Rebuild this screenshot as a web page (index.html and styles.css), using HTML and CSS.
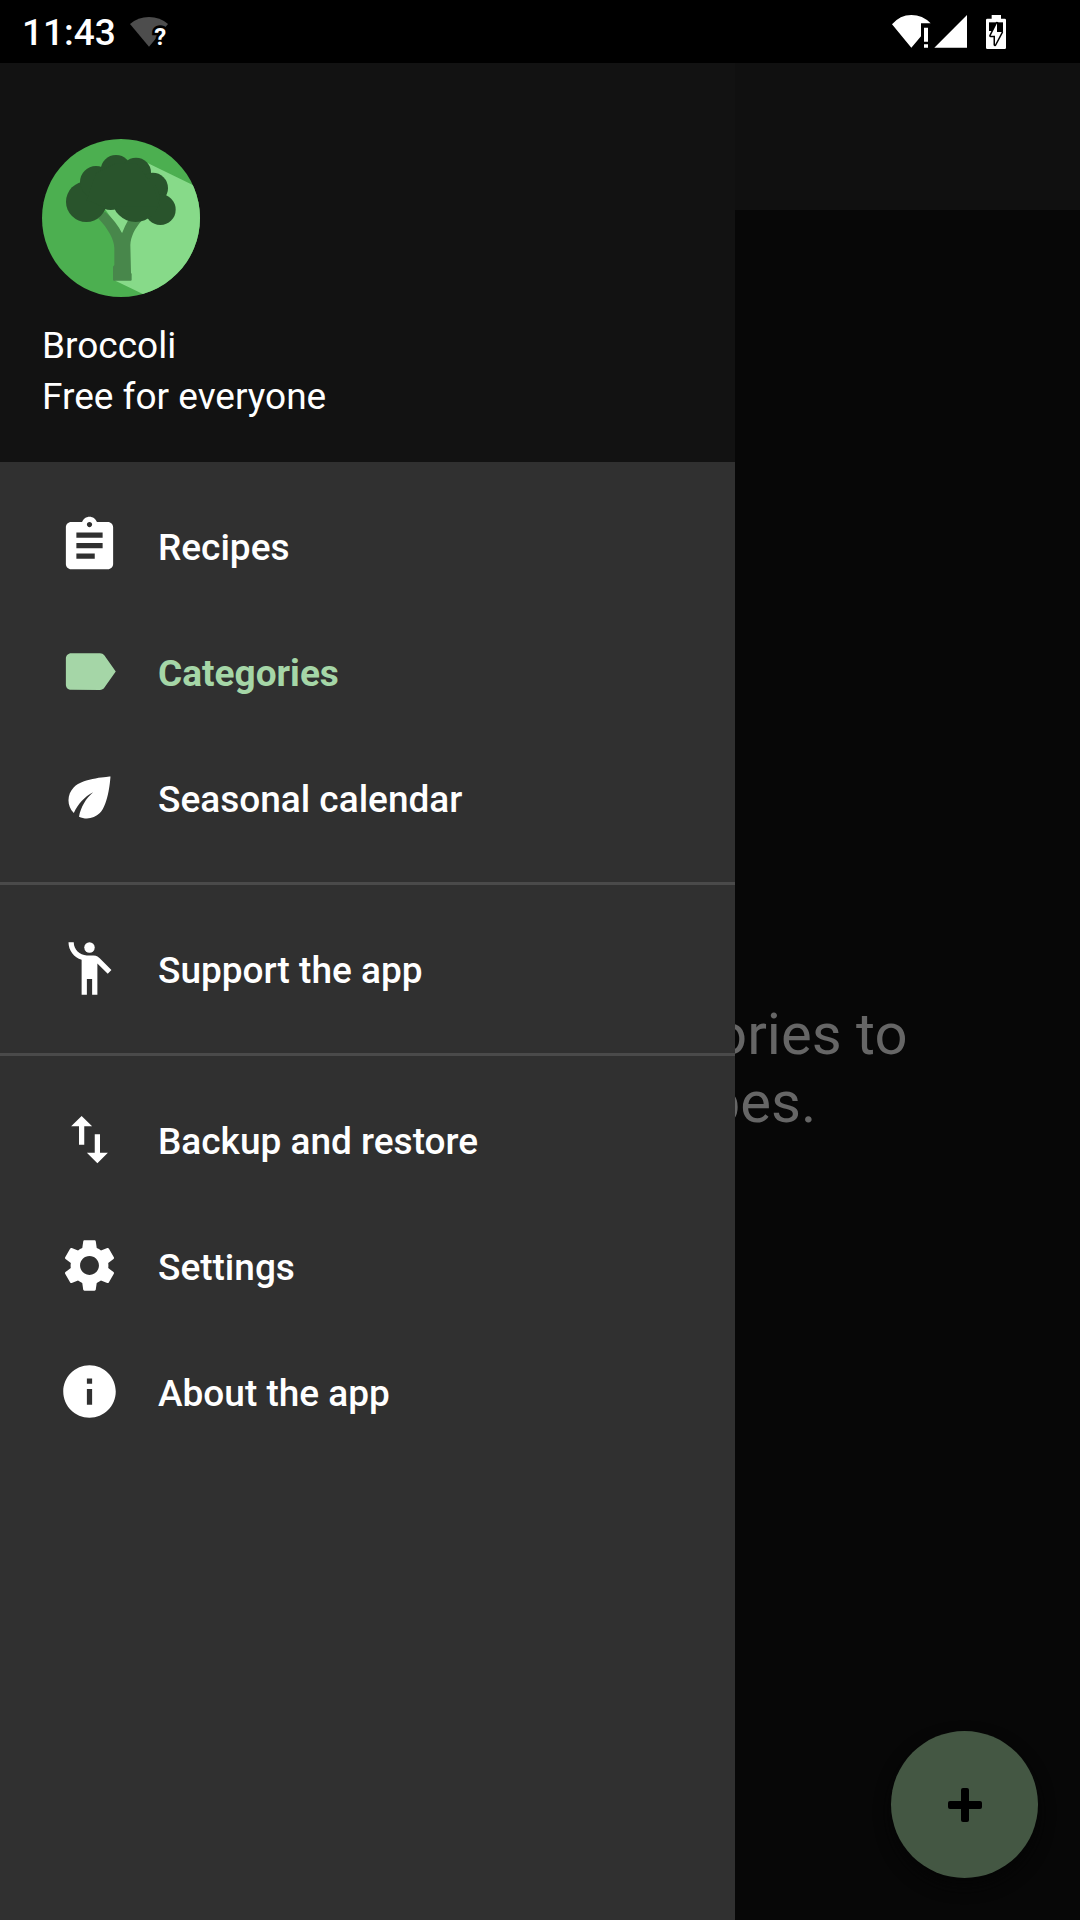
FILE: index.html
```html
<!DOCTYPE html>
<html lang="en">
<head>
<meta charset="utf-8">
<meta name="viewport" content="width=device-width, initial-scale=1">
<title>Broccoli</title>
<link rel="stylesheet" href="styles.css">
</head>
<body>
<div class="status-bar">
  <span class="clock">11:43</span>
  <svg class="wifi-unknown" viewBox="384 44 126 102" aria-hidden="true">
    <path d="M447 139 390 71Q414 50 447 50T504 71Z" fill="#4d4d4d"/>
    <text x="481" y="134" class="wifi-mark">?</text>
  </svg>
  <svg class="status-icons" viewBox="90 36 354 114" aria-hidden="true">
    <path d="M154 140 96 70Q120 42 154 42T212 67H183V106Z"/>
    <path d="M192 80h12v42h-12zM192 130h12v10h-12zM223 140 321 42v98z"/>
    <path d="M395 42h28v11h11q4 0 4 4v83q0 4-4 4h-52q-4 0-4-4V57q0-4 4-4h13z"/>
    <path d="M387 64h42v26h-42z" fill="#000"/>
    <path class="bolt" d="M411 67v26h14L405 131v-27H392z"/>
  </svg>
</div>
<div class="stage">
  <main class="screen">
    <header class="toolbar"></header>
    <p class="empty-hint">Add some new categories to manage your recipes.</p>
    <button class="fab" type="button" aria-label="Add category">
      <svg viewBox="0 0 34 34" aria-hidden="true"><rect x="13" width="8" height="34" rx="2"/><rect y="13" width="34" height="8" rx="2"/></svg>
    </button>
  </main>
  <aside class="drawer">
    <header class="drawer-header">
      <svg class="avatar" viewBox="66 57 474 474" aria-hidden="true">
        <clipPath id="disc"><circle cx="303" cy="294" r="237"/></clipPath>
        <g clip-path="url(#disc)">
          <path fill="#4caf50" d="M66 57h474v474H66z"/>
          <path fill="#87da89" d="M375 125 675 272 590 629 286 482 306 400V340L250 260Z"/>
        </g>
        <path fill="#48874b" d="M234 294C266 328 283 360 283 385V435L279 440V479Q279 482 282 482H332Q335 482 335 479V462L333 458 331 375C332 350 345 325 364 303L350 290H330Q314 318 306 340 290 305 255 275Z"/>
        <g fill="#29542c">
          <circle cx="199" cy="245" r="61"/><circle cx="228" cy="186" r="48"/>
          <circle cx="288" cy="151" r="46"/><circle cx="348" cy="158" r="45"/>
          <circle cx="398" cy="204" r="46"/><circle cx="421" cy="269" r="46"/>
          <circle cx="347" cy="235" r="71"/><circle cx="272" cy="220" r="50"/>
          <path d="M228 160 288 130H350L400 200 420 260H250L200 240Z"/>
        </g>
      </svg>
      <p class="app-name">Broccoli</p>
      <p class="app-tagline">Free for everyone</p>
    </header>
    <nav>
      <ul class="menu-group">
        <li><a class="menu-item" href="#recipes"><svg viewBox="0 0 24 24" aria-hidden="true"><path d="M19 3h-4.180C14.400 1.840 13.300 1 12 1s-2.400.840-2.820 2H5c-1.100 0-2 .9-2 2v14c0 1.100.9 2 2 2h14c1.100 0 2-.9 2-2V5c0-1.100-.9-2-2-2zm-7 0c.55 0 1 .45 1 1s-.45 1-1 1-1-.45-1-1 .45-1 1-1zm2 14H7v-2h7v2zm3-4H7v-2h10v2zm0-4H7V7h10v2z"/></svg>Recipes</a></li>
        <li><a class="menu-item selected" href="#categories" aria-current="page"><svg viewBox="0 0 24 24" aria-hidden="true"><path d="M17.630 5.840C17.270 5.330 16.670 5 16 5L5 5.010C3.900 5.010 3 5.900 3 7v10c0 1.100.9 1.990 2 1.990L16 19c.67 0 1.270-.33 1.630-.84L22 12l-4.370-6.160z"/></svg>Categories</a></li>
        <li><a class="menu-item" href="#calendar"><svg viewBox="0 0 24 24" aria-hidden="true"><path d="M6.050 8.050c-2.730 2.730-2.730 7.150-.02 9.880 1.470-3.400 4.090-6.240 7.360-7.930-2.770 2.340-4.710 5.610-5.390 9.320 2.600 1.230 5.800.78 7.950-1.370C19.430 14.470 20 4 20 4S9.530 4.570 6.050 8.050z"/></svg>Seasonal calendar</a></li>
      </ul>
      <ul class="menu-group">
        <li><a class="menu-item" href="#support"><svg viewBox="0 0 24 24" aria-hidden="true"><circle cx="12" cy="4" r="2"/><path d="M15.890 8.110C15.500 7.720 14.830 7 13.530 7h-2.540C8.240 6.990 6 4.750 6 2H4c0 3.160 2.110 5.840 5 6.710V22h2v-6h2v6h2V10.050L18.950 14l1.410-1.410-4.470-4.480z"/></svg>Support the app</a></li>
      </ul>
      <ul class="menu-group">
        <li><a class="menu-item" href="#backup"><svg viewBox="0 0 24 24" aria-hidden="true"><path d="M16 17.010V10h-2v7.010h-3L15 21l4-3.990h-3zM9 3 5 6.990h3V14h2V6.990h3L9 3z"/></svg>Backup and restore</a></li>
        <li><a class="menu-item" href="#settings"><svg viewBox="0 0 24 24" aria-hidden="true"><path d="M19.140 12.940c.04-.3.060-.61.060-.94 0-.32-.02-.64-.07-.94l2.030-1.580c.18-.14.230-.41.120-.61l-1.920-3.320c-.12-.22-.37-.29-.59-.22l-2.390.96c-.5-.38-1.030-.7-1.620-.94l-.36-2.540c-.04-.24-.24-.41-.48-.41h-3.840c-.24 0-.43.170-.47.410l-.36 2.540c-.59.240-1.130.57-1.620.94l-2.390-.96c-.22-.08-.47 0-.59.220L2.740 8.870c-.12.210-.08.470.120.610l2.030 1.580c-.05.300-.09.630-.09.940s.020.640.070.940l-2.030 1.580c-.18.140-.23.410-.12.610l1.920 3.320c.12.220.37.290.59.220l2.390-.96c.5.380 1.030.7 1.620.94l.36 2.540c.05.240.24.410.48.410h3.840c.24 0 .44-.17.470-.41l.36-2.540c.59-.24 1.130-.56 1.620-.94l2.390.96c.22.080.47 0 .59-.22l1.920-3.320c.12-.22.070-.47-.12-.61l-2.010-1.580zM12 15.600c-1.980 0-3.600-1.620-3.600-3.600s1.620-3.600 3.600-3.600 3.600 1.620 3.600 3.600-1.620 3.600-3.600 3.600z"/></svg>Settings</a></li>
        <li><a class="menu-item" href="#about"><svg viewBox="0 0 24 24" aria-hidden="true"><path d="M12 2C6.480 2 2 6.480 2 12s4.480 10 10 10 10-4.480 10-10S17.520 2 12 2zm1 15h-2v-6h2v6zm0-8h-2V7h2v2z"/></svg>About the app</a></li>
      </ul>
    </nav>
  </aside>
</div>
</body>
</html>
```

FILE: styles.css
```css
* {
  box-sizing: border-box;
}

body {
  margin: 0;
  min-height: 100vh;
  display: flex;
  flex-direction: column;
  background: #070707;
  color: #fff;
  font-family: Roboto, "Liberation Sans", sans-serif;
  font-size: 37px;
}

p,
ul {
  margin: 0;
  padding: 0;
  list-style: none;
}

.status-bar {
  display: flex;
  align-items: center;
  height: 63px;
  padding: 0 72px 0 22px;
  background: #000;
  font-weight: 500;
}

.clock {
  padding-top: 2px;
}

.wifi-unknown {
  width: 42px;
  height: 34px;
  margin-left: 12px;
  overflow: visible;
}

.wifi-mark {
  fill: #fff;
  stroke: #000;
  stroke-width: 16px;
  paint-order: stroke;
  font-size: 72px;
  font-weight: 700;
  text-anchor: middle;
}

.status-icons {
  width: 118px;
  height: 38px;
  margin-left: auto;
  fill: #fff;
}

.bolt {
  stroke: #000;
  stroke-width: 9px;
  stroke-linejoin: round;
  paint-order: stroke;
}

/* The drawer shares one grid cell with the screen that it covers. */
.stage {
  flex: 1;
  display: grid;
  grid-template: 1fr / 1fr;
}

.screen,
.drawer {
  grid-area: 1 / 1;
}

.screen {
  display: flex;
  flex-direction: column;
}

.toolbar {
  height: 147px;
  background: #101010;
}

.empty-hint {
  margin: auto;
  max-width: 800px;
  padding-top: 5px;
  color: #666;
  font-size: 58px;
  line-height: 68px;
  text-align: center;
}

.fab {
  position: fixed;
  right: 42px;
  bottom: 42px;
  display: grid;
  place-items: center;
  width: 147px;
  height: 147px;
  padding: 0;
  border: 0;
  border-radius: 50%;
  background: #445743;
  box-shadow: 0 8px 16px #050505;
}

.fab svg {
  width: 34px;
  height: 34px;
}

.drawer {
  z-index: 1;
  width: 735px;
  max-width: 85%;
  background: #303030;
}

.drawer-header {
  padding: 76px 42px 40px;
  background: #121212;
  line-height: 51px;
}

.avatar {
  display: block;
  width: 158px;
  height: 158px;
  margin-bottom: 23px;
}

.menu-group {
  padding: 21px 0;
}

.menu-group + .menu-group {
  border-top: 3px solid #4a4a4a;
}

.menu-item {
  display: flex;
  align-items: center;
  gap: 37px;
  height: 126px;
  padding: 2px 58px 0;
  color: #fff;
  font-weight: 500;
  text-decoration: none;
}

.menu-item svg {
  flex: none;
  width: 63px;
  height: 63px;
  margin-bottom: 4px;
  fill: currentColor;
}

.menu-item.selected {
  color: #a5d6a7;
  font-weight: 700;
}
```
